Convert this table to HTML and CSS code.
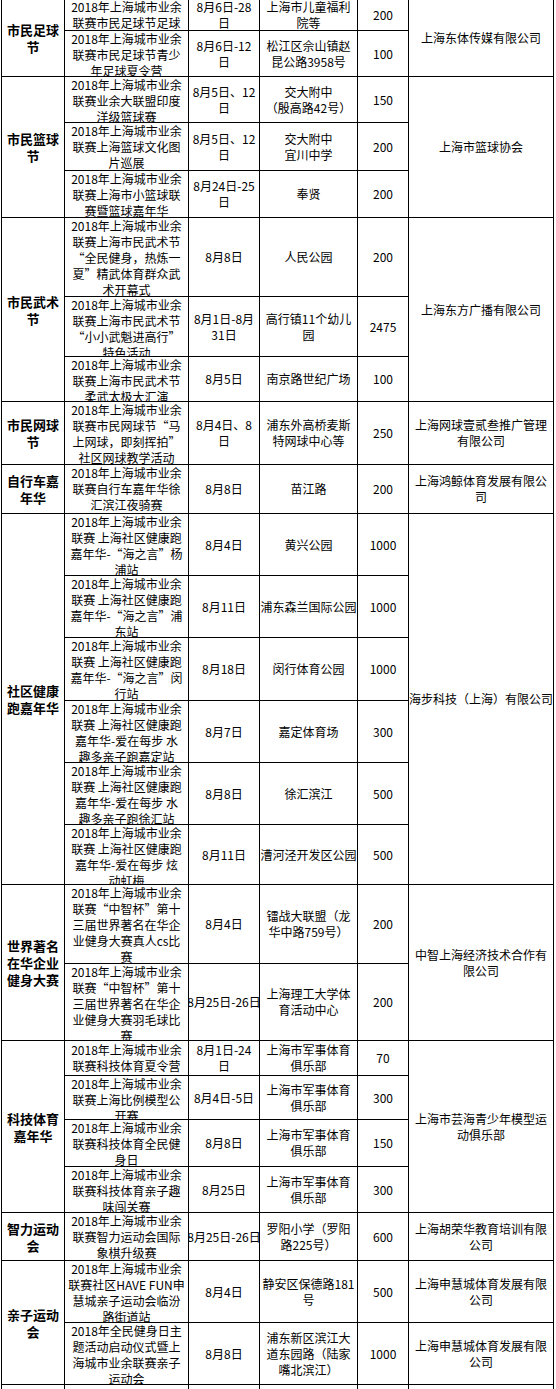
FILE: index.html
```html
<!DOCTYPE html>
<html lang="zh-CN">
<head>
<meta charset="utf-8">
<title>2018年上海城市业余联赛活动表</title>
<link rel="stylesheet" href="styles.css">
</head>
<body>
<div class="sheet">
  <!-- 市民足球节 -->
  <div class="c cat s2">市民足球<br>节</div>
  <div class="c">2018年上海城市业余<br>联赛市民足球节足球</div>
  <div class="c">8月6日-28<br>日</div>
  <div class="c">上海市儿童福利<br>院等</div>
  <div class="c">200</div>
  <div class="c s2">上海东体传媒有限公司</div>
  <div class="c">2018年上海城市业余<br>联赛市民足球节青少<br>年足球夏令营</div>
  <div class="c">8月6日-12<br>日</div>
  <div class="c">松江区佘山镇赵<br>昆公路3958号</div>
  <div class="c">100</div>

  <!-- 市民篮球节 -->
  <div class="c cat s3">市民篮球<br>节</div>
  <div class="c">2018年上海城市业余<br>联赛业余大联盟印度<br>洋级篮球赛</div>
  <div class="c">8月5日、12<br>日</div>
  <div class="c">交大附中<br>（殷高路42号）</div>
  <div class="c">150</div>
  <div class="c s3">上海市篮球协会</div>
  <div class="c">2018年上海城市业余<br>联赛上海篮球文化图<br>片巡展</div>
  <div class="c">8月5日、12<br>日</div>
  <div class="c">交大附中<br>宜川中学</div>
  <div class="c">200</div>
  <div class="c">2018年上海城市业余<br>联赛上海市小篮球联<br>赛暨篮球嘉年华</div>
  <div class="c">8月24日-25<br>日</div>
  <div class="c">奉贤</div>
  <div class="c">200</div>

  <!-- 市民武术节 -->
  <div class="c cat s3">市民武术<br>节</div>
  <div class="c">2018年上海城市业余<br>联赛上海市民武术节<br>“全民健身，热炼一<br>夏”精武体育群众武<br>术开幕式</div>
  <div class="c">8月8日</div>
  <div class="c">人民公园</div>
  <div class="c">200</div>
  <div class="c s3">上海东方广播有限公司</div>
  <div class="c">2018年上海城市业余<br>联赛上海市民武术节<br>“小小武魁进高行”<br>特色活动</div>
  <div class="c">8月1日-8月<br>31日</div>
  <div class="c">高行镇11个幼儿<br>园</div>
  <div class="c">2475</div>
  <div class="c">2018年上海城市业余<br>联赛上海市民武术节<br>柔武太极大汇演</div>
  <div class="c">8月5日</div>
  <div class="c">南京路世纪广场</div>
  <div class="c">100</div>

  <!-- 市民网球节 -->
  <div class="c cat">市民网球<br>节</div>
  <div class="c">2018年上海城市业余<br>联赛市民网球节“马<br>上网球，即刻挥拍”<br>社区网球教学活动</div>
  <div class="c">8月4日、8<br>日</div>
  <div class="c">浦东外高桥麦斯<br>特网球中心等</div>
  <div class="c">250</div>
  <div class="c">上海网球壹贰叁推广管理<br>有限公司</div>

  <!-- 自行车嘉年华 -->
  <div class="c cat">自行车嘉<br>年华</div>
  <div class="c">2018年上海城市业余<br>联赛自行车嘉年华徐<br>汇滨江夜骑赛</div>
  <div class="c">8月8日</div>
  <div class="c">苗江路</div>
  <div class="c">200</div>
  <div class="c">上海鸿鲸体育发展有限公<br>司</div>

  <!-- 社区健康跑嘉年华 -->
  <div class="c cat s6">社区健康<br>跑嘉年华</div>
  <div class="c">2018年上海城市业余<br>联赛 上海社区健康跑<br>嘉年华-“海之言”杨<br>浦站</div>
  <div class="c">8月4日</div>
  <div class="c">黄兴公园</div>
  <div class="c">1000</div>
  <div class="c s6">海步科技（上海）有限公司</div>
  <div class="c">2018年上海城市业余<br>联赛 上海社区健康跑<br>嘉年华-“海之言”浦<br>东站</div>
  <div class="c">8月11日</div>
  <div class="c">浦东森兰国际公园</div>
  <div class="c">1000</div>
  <div class="c">2018年上海城市业余<br>联赛 上海社区健康跑<br>嘉年华-“海之言”闵<br>行站</div>
  <div class="c">8月18日</div>
  <div class="c">闵行体育公园</div>
  <div class="c">1000</div>
  <div class="c">2018年上海城市业余<br>联赛 上海社区健康跑<br>嘉年华-爱在每步 水<br>趣多亲子跑嘉定站</div>
  <div class="c">8月7日</div>
  <div class="c">嘉定体育场</div>
  <div class="c">300</div>
  <div class="c">2018年上海城市业余<br>联赛 上海社区健康跑<br>嘉年华-爱在每步 水<br>趣多亲子跑徐汇站</div>
  <div class="c">8月8日</div>
  <div class="c">徐汇滨江</div>
  <div class="c">500</div>
  <div class="c">2018年上海城市业余<br>联赛 上海社区健康跑<br>嘉年华-爱在每步 炫<br>动虹梅</div>
  <div class="c">8月11日</div>
  <div class="c">漕河泾开发区公园</div>
  <div class="c">500</div>

  <!-- 世界著名在华企业健身大赛 -->
  <div class="c cat s2">世界著名<br>在华企业<br>健身大赛</div>
  <div class="c">2018年上海城市业余<br>联赛“中智杯”第十<br>三届世界著名在华企<br>业健身大赛真人cs比<br>赛</div>
  <div class="c">8月4日</div>
  <div class="c">镭战大联盟（龙<br>华中路759号）</div>
  <div class="c">200</div>
  <div class="c s2">中智上海经济技术合作有<br>限公司</div>
  <div class="c">2018年上海城市业余<br>联赛“中智杯”第十<br>三届世界著名在华企<br>业健身大赛羽毛球比<br>赛</div>
  <div class="c">8月25日-26日</div>
  <div class="c">上海理工大学体<br>育活动中心</div>
  <div class="c">200</div>

  <!-- 科技体育嘉年华 -->
  <div class="c cat s4">科技体育<br>嘉年华</div>
  <div class="c">2018年上海城市业余<br>联赛科技体育夏令营</div>
  <div class="c">8月1日-24<br>日</div>
  <div class="c">上海市军事体育<br>俱乐部</div>
  <div class="c">70</div>
  <div class="c s4">上海市芸海青少年模型运<br>动俱乐部</div>
  <div class="c">2018年上海城市业余<br>联赛上海比例模型公<br>开赛</div>
  <div class="c">8月4日-5日</div>
  <div class="c">上海市军事体育<br>俱乐部</div>
  <div class="c">300</div>
  <div class="c">2018年上海城市业余<br>联赛科技体育全民健<br>身日</div>
  <div class="c">8月8日</div>
  <div class="c">上海市军事体育<br>俱乐部</div>
  <div class="c">150</div>
  <div class="c">2018年上海城市业余<br>联赛科技体育亲子趣<br>味闯关赛</div>
  <div class="c">8月25日</div>
  <div class="c">上海市军事体育<br>俱乐部</div>
  <div class="c">300</div>

  <!-- 智力运动会 -->
  <div class="c cat">智力运动<br>会</div>
  <div class="c">2018年上海城市业余<br>联赛智力运动会国际<br>象棋升级赛</div>
  <div class="c">8月25日-26日</div>
  <div class="c">罗阳小学（罗阳<br>路225号）</div>
  <div class="c">600</div>
  <div class="c">上海胡荣华教育培训有限<br>公司</div>

  <!-- 亲子运动会 -->
  <div class="c cat s2">亲子运动<br>会</div>
  <div class="c">2018年上海城市业余<br>联赛社区HAVE FUN申<br>慧城亲子运动会临汾<br>路街道站</div>
  <div class="c">8月4日</div>
  <div class="c">静安区保德路181<br>号</div>
  <div class="c">500</div>
  <div class="c">上海申慧城体育发展有限<br>公司</div>
  <div class="c">2018年全民健身日主<br>题活动启动仪式暨上<br>海城市业余联赛亲子<br>运动会</div>
  <div class="c">8月8日</div>
  <div class="c">浦东新区滨江大<br>道东园路（陆家<br>嘴北滨江）</div>
  <div class="c">1000</div>
  <div class="c">上海申慧城体育发展有限<br>公司</div>

  <!-- next row (cut off) -->
  <div class="c"></div>
  <div class="c"></div>
  <div class="c"></div>
  <div class="c"></div>
  <div class="c"></div>
  <div class="c"></div>
</div>
</body>
</html>
```

FILE: styles.css
```css
html, body {
  margin: 0;
  padding: 0;
  background: #fff;
  overflow: hidden;
}

.sheet {
  display: grid;
  grid-template-columns: 63px 124px 71px 98px 51px 145px;
  grid-template-rows:
    32px 46px
    46px 48px 47px
    79px 60px 45px
    63px
    49px
    62px 62px 63px 62px 62px 60px
    79px 77px
    35px 44px 47px 46px
    48px
    62px 62px
    5px;
  width: max-content;
  margin: -2px 0 0 1px;
  border-left: 1px solid #000;
  border-top: 1px solid #000;
  font-family: "Noto Sans CJK SC", sans-serif;
  font-size: 12px;
  line-height: 16px;
  color: #000;
}

.c {
  box-sizing: border-box;
  border-right: 1px solid #000;
  border-bottom: 1px solid #000;
  display: flex;
  flex-direction: column;
  justify-content: safe center;
  align-items: center;
  overflow: hidden;
  text-align: center;
  white-space: nowrap;
  min-width: 0;
  min-height: 0;
}

.cat {
  font-weight: bold;
  font-size: 13px;
  line-height: 17px;
}

.s2 { grid-row: span 2; }
.s3 { grid-row: span 3; }
.s4 { grid-row: span 4; }
.s6 { grid-row: span 6; }
```
